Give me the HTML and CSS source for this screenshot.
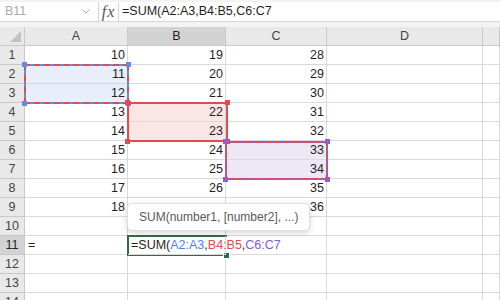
FILE: index.html
```html
<!DOCTYPE html>
<html lang="en">

<head>
    <meta charset="UTF-8">
    <title>Sheet</title>
    <link rel="stylesheet" href="styles.css">
</head>

<body>
    <div id="bar">
        <div class="name-box">
            <span>B11</span>
            <svg width="8" height="5" viewBox="0 0 8 5"><polyline points="0.5,0.5 4,4 7.5,0.5" fill="none" stroke="#a8a8a8" stroke-width="1"/></svg>
        </div>
        <div class="fx">fx</div>
        <div class="formula">=SUM(A2:A3,B4:B5,C6:C7</div>
    </div>

    <div id="sheet">
        <div class="grid">
            <div class="corner"></div><div class="ch">A</div><div class="ch sel">B</div><div class="ch">C</div><div class="ch">D</div><div class="ch"></div>

            <div class="rh">1</div><div class="c">10</div><div class="c">19</div><div class="c">28</div><div class="c"></div><div class="c"></div>
            <div class="rh">2</div><div class="c fill-a">11</div><div class="c">20</div><div class="c">29</div><div class="c"></div><div class="c"></div>
            <div class="rh">3</div><div class="c fill-a">12</div><div class="c">21</div><div class="c">30</div><div class="c"></div><div class="c"></div>
            <div class="rh">4</div><div class="c">13</div><div class="c fill-b">22</div><div class="c">31</div><div class="c"></div><div class="c"></div>
            <div class="rh">5</div><div class="c">14</div><div class="c fill-b">23</div><div class="c">32</div><div class="c"></div><div class="c"></div>
            <div class="rh">6</div><div class="c">15</div><div class="c">24</div><div class="c fill-c">33</div><div class="c"></div><div class="c"></div>
            <div class="rh">7</div><div class="c">16</div><div class="c">25</div><div class="c fill-c">34</div><div class="c"></div><div class="c"></div>
            <div class="rh">8</div><div class="c">17</div><div class="c">26</div><div class="c">35</div><div class="c"></div><div class="c"></div>
            <div class="rh">9</div><div class="c">18</div><div class="c"></div><div class="c">36</div><div class="c"></div><div class="c"></div>
            <div class="rh">10</div><div class="c"></div><div class="c"></div><div class="c"></div><div class="c"></div><div class="c"></div>
            <div class="rh sel">11</div><div class="c text">=</div><div class="c text edit">=SUM(<span class="ref-a">A2:A3</span>,<span class="ref-b">B4:B5</span>,<span class="ref-c">C6:C7</span></div><div class="c"></div><div class="c"></div><div class="c"></div>
            <div class="rh">12</div><div class="c"></div><div class="c"></div><div class="c"></div><div class="c"></div><div class="c"></div>
            <div class="rh">13</div><div class="c"></div><div class="c"></div><div class="c"></div><div class="c"></div><div class="c"></div>
            <div class="rh">14</div><div class="c"></div><div class="c"></div><div class="c"></div><div class="c"></div><div class="c"></div>
        </div>

        <!-- formula reference boxes -->
        <div class="range range-a"><i class="tl"></i><i class="tr"></i><i class="bl"></i><i class="br"></i></div>
        <div class="range range-b"><i class="tl"></i><i class="tr"></i><i class="bl"></i><i class="br"></i></div>
        <div class="range range-c"><i class="tl"></i><i class="tr"></i><i class="bl"></i><i class="br"></i></div>

        <div class="active"><i></i></div>

        <div class="tip">SUM(number1, [number2], ...)</div>
    </div>
</body>

</html>
```

FILE: styles.css
```css
html,
body {
    margin: 0;
    height: 300px;
    overflow: hidden;
}

body {
    background: #f3f3f3;
    font-family: "Liberation Sans", Arial, sans-serif;
    font-size: 12.5px;
    color: #1f1f1f;
}

#bar {
    display: flex;
    height: 19px;
    margin: 2px 0 5px;
    background: #fff;
    border-bottom: 1px solid #d6d6d6;
    line-height: 19px;
}

#bar .name-box {
    display: flex;
    align-items: center;
    justify-content: space-between;
    width: 99px;
    padding: 0 8px 0 5px;
    box-sizing: border-box;
    border-right: 1px solid #d6d6d6;
    color: #a9a9a9;
}

#bar .fx {
    width: 20px;
    box-sizing: border-box;
    border-right: 1px solid #d6d6d6;
    font-family: "Liberation Serif", "Times New Roman", serif;
    font-style: italic;
    font-size: 16px;
    letter-spacing: 1px;
    color: #555;
    text-align: center;
}

#bar .formula {
    flex: 1;
    padding-left: 3px;
    color: #1f1f1f;
    white-space: nowrap;
}

#sheet {
    position: relative;
    background: #fff;
}

.grid {
    display: grid;
    grid-template-columns: 25px 103px 98px 101px 156px 17px;
    grid-auto-rows: 19px;
}

.grid > div {
    box-sizing: border-box;
    line-height: 18px;
    border-right: 1px solid #d9d9d9;
    border-bottom: 1px solid #d9d9d9;
    white-space: nowrap;
}

.grid .corner {
    position: relative;
    background: #e9e9e9;
    border-color: #c9c9c9;
}

.grid .corner::after {
    content: "";
    position: absolute;
    right: 3px;
    bottom: 3px;
    width: 11px;
    height: 11px;
    background: #c3c3c3;
    clip-path: polygon(100% 0, 100% 100%, 0 100%);
}

.grid .ch {
    background: #e9e9e9;
    border-color: #c9c9c9;
    color: #444;
    text-align: center;
}

.grid .rh {
    background: #e9e9e9;
    border-color: #c9c9c9;
    color: #444;
    text-align: center;
}

.grid .sel {
    background: #d3d3d3;
    color: #222;
}

.grid .c {
    padding: 0 2px;
    text-align: right;
}

.grid .text {
    text-align: left;
    padding-left: 3px;
}

.grid .edit {
    position: relative;
    z-index: 2;
    overflow: visible;
}

.fill-a {
    background: #e8effb;
}

.fill-b {
    background: #fce5e5;
}

.fill-c {
    background: #ede7f6;
}

.ref-a {
    color: #4f82e3;
}

.ref-b {
    color: #e5484d;
}

.ref-c {
    color: #8759d3;
}

.range {
    position: absolute;
    box-sizing: border-box;
    border: 2px solid var(--c);
}

.range::before {
    content: "";
    position: absolute;
    top: -2px;
    left: -2px;
    right: -2px;
    bottom: -2px;
    border: 2px dashed #e5484d;
}

.range i {
    position: absolute;
    width: 5px;
    height: 5px;
    background: var(--c);
}

.range .tl { top: -4px; left: -4px; }
.range .tr { top: -4px; right: -4px; }
.range .bl { bottom: -4px; left: -4px; }
.range .br { bottom: -4px; right: -4px; }

.range-a {
    --c: #5b8fe6;
    top: 37px;
    left: 24px;
    width: 105px;
    height: 40px;
}

.range-b {
    --c: #e54a4a;
    top: 75px;
    left: 127px;
    width: 101px;
    height: 40px;
}

.range-c {
    --c: #8a63d2;
    top: 114px;
    left: 225px;
    width: 103px;
    height: 39px;
}

.active {
    position: absolute;
    top: 208px;
    left: 127px;
    width: 100px;
    height: 21px;
    box-sizing: border-box;
    border: 2px solid #2f6b47;
    border-right: 0;
}

.active i {
    position: absolute;
    right: -3px;
    bottom: -5px;
    width: 5px;
    height: 5px;
    background: #2f6b47;
    border: 1px solid #fff;
}

.tip {
    position: absolute;
    top: 176px;
    left: 127px;
    width: 183px;
    height: 28px;
    box-sizing: border-box;
    padding-left: 11px;
    background: #fff;
    border: 1px solid #dedede;
    border-radius: 5px;
    box-shadow: 0 2px 6px rgba(0, 0, 0, .16);
    font-size: 12px;
    line-height: 26px;
    color: #5a5a5a;
    white-space: nowrap;
}
```
